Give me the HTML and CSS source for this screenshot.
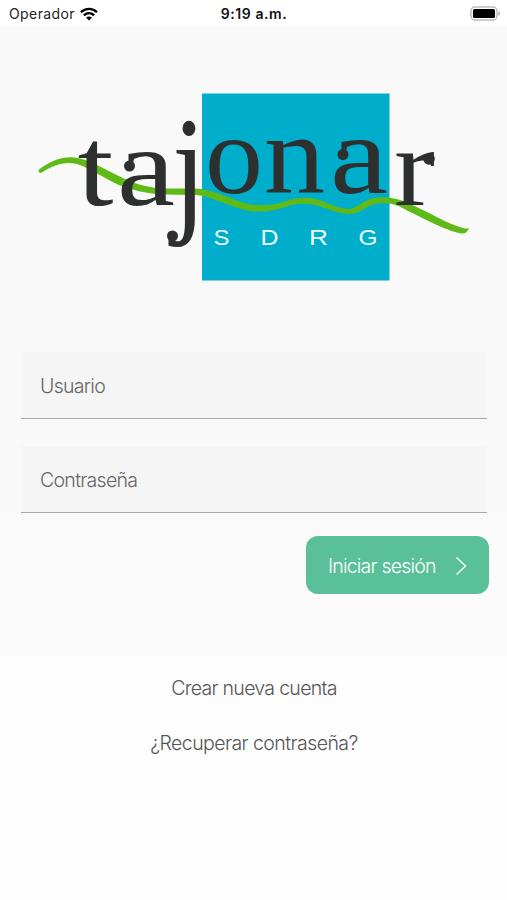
FILE: index.html
```html
<!DOCTYPE html>
<html lang="es">
<head>
    <meta charset="UTF-8">
    <title>Tajonar</title>
    <link rel="stylesheet" href="styles.css">
</head>
<body>
    <!-- Barra de estado -->
    <header class="status-bar">
        <div class="carrier">
            <span>Operador</span>
            <svg class="wifi" width="18" height="14" viewBox="0 0 18 14" fill="none" stroke="#000" stroke-width="2.3">
                <path d="M1 5.200C5.600.7 12.400.7 17 5.200"/>
                <path d="M3.900 8.300c3-2.800 7.200-2.800 10.200 0"/>
                <path d="M9 13.600l-3-3c1.700-1.500 4.300-1.500 6 0z" fill="#000" stroke="none"/>
            </svg>
        </div>
        <div class="time">9:19 a.m.</div>
        <div class="battery">
            <svg width="31" height="15" viewBox="0 0 31 15">
                <rect x="1" y="1" width="26" height="13" rx="4" fill="#fff" stroke="#bdbdbd" stroke-width="1.500"/>
                <rect x="3" y="3" width="22" height="9" rx="1.500" fill="#000"/>
                <path d="M28.500 5.200c2 .8 2 3.800 0 4.600z" fill="#a8a8a8"/>
            </svg>
        </div>
    </header>

    <main class="login">
        <!-- Logo -->
        <svg class="logo" width="431" height="188" viewBox="38 93 431 188">
            <rect x="202" y="93.500" width="187.500" height="187" fill="#00adcb"/>
            <path class="wave" d="M38.500 170C50 161 62 156.500 74 157.500C90 159 105 170 125 179C138 185 150 188 165 188.500L195 188.500C212 189 230 199 248 204C266 207 278 204 289 200C301 197 311 197 322 201C333 205 340 209 349 209C358 208 361 201 374 198C387 196 399 199 408 203C427 211 447 224 463 228Q467 229 469 228Q467 234 461 233.500C444 230 421 217 408 211C400 206 392 203 384 203C367 203 365 212 351 214C338 214 329 209 319 206C307 203 297 203 289 206C275 211 262 213 247 210.500C230 207 211 196 196 195L165 194.500C147 194 132 190 119 185C103 178 90 168 77 164C64 161 54 165 41 173Q38 173 38.500 170Z"/>
            <g class="logo-text">
                <text x="77.500" y="205" textLength="36" lengthAdjust="spacingAndGlyphs">t</text>
                <text x="117" y="204.500" textLength="58" lengthAdjust="spacingAndGlyphs">a</text>
                <text transform="translate(172 215.500) scale(1.080 1.280)">j</text>
                <text x="205" y="193" textLength="58" lengthAdjust="spacingAndGlyphs">o</text>
                <text x="264" y="193" textLength="61" lengthAdjust="spacingAndGlyphs">n</text>
                <text x="330" y="193" textLength="58" lengthAdjust="spacingAndGlyphs">a</text>
                <text x="394" y="204.500" textLength="41" lengthAdjust="spacingAndGlyphs">r</text>
                <!-- Remates redondos de las letras -->
                <circle cx="129.500" cy="166" r="5.500"/>
                <circle cx="172.500" cy="236" r="5.500"/>
                <circle cx="343" cy="154.500" r="5.500"/>
                <circle cx="429" cy="159" r="5.800"/>
            </g>
            <g class="logo-sub">
                <text x="213.500" y="244.500" textLength="16" lengthAdjust="spacingAndGlyphs">S</text>
                <text x="260.500" y="244.500" textLength="18" lengthAdjust="spacingAndGlyphs">D</text>
                <text x="309" y="244.500" textLength="19" lengthAdjust="spacingAndGlyphs">R</text>
                <text x="358.500" y="244.500" textLength="19" lengthAdjust="spacingAndGlyphs">G</text>
            </g>
        </svg>

        <!-- Formulario -->
        <form class="form">
            <input type="text" class="field user" placeholder="Usuario">
            <input type="password" class="field password" placeholder="Contraseña">
            <button type="button" class="submit">
                <span>Iniciar sesión</span>
                <svg width="12" height="20" viewBox="0 0 12 20" fill="none" stroke="#fff" stroke-width="1.400">
                    <path d="M1.500 1.500l9 8.500-9 8.500"/>
                </svg>
            </button>
        </form>

        <!-- Enlaces -->
        <nav class="links">
            <a class="link create">Crear nueva cuenta</a>
            <a class="link recover">¿Recuperar contraseña?</a>
        </nav>
    </main>
</body>
</html>
```
FILE: styles.css
```css
* {
    box-sizing: border-box;
}
body {
    margin: 0;
    height: 900px;
    display: flex;
    flex-direction: column;
    background-color: #fff;
    font-family: Inter, "Liberation Sans", sans-serif;
}

/* Barra de estado */
.status-bar {
    display: grid;
    grid-template-columns: 1fr auto 1fr;
    align-items: center;
    height: 26px;
    padding: 1px 6px 0 9px;
    font-size: 14px;
    color: #222;
}
.carrier {
    display: flex;
    align-items: center;
    gap: 5px;
    letter-spacing: 0.4px;
}
.time {
    margin-right: 2px;
    font-weight: 600;
    letter-spacing: 0.55px;
    color: #111;
}
.battery {
    display: flex;
    justify-content: flex-end;
}

/* Pantalla de acceso */
.login {
    flex: 1;
    display: flex;
    flex-direction: column;
    padding: 67px 18px 0 21px;
    background: linear-gradient(#f9f9f9 0, #f9f9f9 440px, #fbfbfb 630px, #fdfdfd 632px, #fefefe 100%);
}
.logo {
    margin-left: 17px;
    overflow: visible;
}
.wave {
    fill: #5fb916;
}
.logo-text {
    font-family: "Liberation Serif", serif;
    font-size: 113px;
    fill: #2d302f;
}
.logo-sub {
    font-family: "Liberation Sans", sans-serif;
    font-size: 21.5px;
    fill: #e8fbff;
}

.form {
    display: flex;
    flex-direction: column;
    margin-top: 71px;
}
.field {
    width: 466px;
    height: 67px;
    margin-bottom: 27px;
    padding: 1px 19px 0;
    border: none;
    border-bottom: 1.5px solid #a8a8a8;
    border-radius: 0;
    background-color: #f5f5f5;
    font-family: inherit;
    font-size: 19.5px;
    font-weight: 300;
    letter-spacing: -0.7px;
}
.field.password {
    margin-bottom: 23px;
}
.field::placeholder {
    color: #666;
    opacity: 1;
}
.submit {
    align-self: flex-end;
    display: flex;
    align-items: center;
    justify-content: space-between;
    width: 183px;
    height: 58px;
    padding: 1px 22px 0;
    border: none;
    border-radius: 12px;
    background-color: #59c09a;
    color: #fff;
    font-family: inherit;
    font-size: 19.5px;
    font-weight: 300;
    letter-spacing: -0.8px;
    cursor: pointer;
}

.links {
    display: flex;
    flex-direction: column;
    align-items: center;
    gap: 31px;
    margin-top: 82px;
    font-size: 19.5px;
    line-height: 24px;
    font-weight: 300;
    letter-spacing: -0.7px;
    color: #555;
}
.link {
    margin-right: 2px;
}
.recover {
    letter-spacing: -0.55px;
}
```
